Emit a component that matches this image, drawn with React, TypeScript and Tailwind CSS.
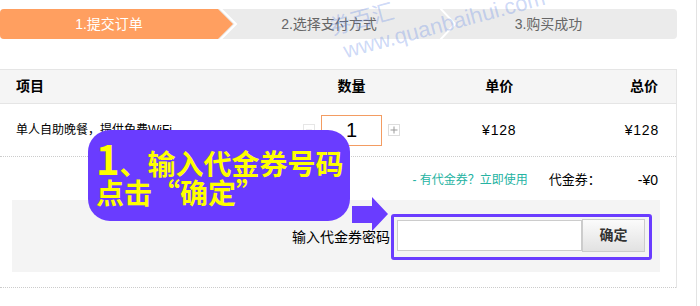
import React from "react";

const FONT = { fontFamily: '"Liberation Sans", "Noto Sans CJK SC", sans-serif' };

export default function App() {
  return (
    <div className="relative w-[700px] h-[306px] overflow-hidden bg-white text-black" style={FONT}>
      <div className="w-[697px] h-[306px] border-r border-[#e3e3e3]">
        {/* Steps bar */}
        <div className="pt-[9px]">
          <div className="relative w-[677px] h-[30px] rounded-[4px] overflow-hidden bg-[#ebebeb]">
            <svg className="absolute left-0 top-0" width="677" height="30" viewBox="0 0 677 30">
              <polygon points="0,0 218,0 233,15 218,30 0,30" fill="#ff9f60" />
              <polyline points="220,-1 236,15 220,31" fill="none" stroke="#ffffff" strokeWidth="2" />
              <polyline points="440,-1 455,15 440,31" fill="none" stroke="#ffffff" strokeWidth="2" />
            </svg>
            <div className="relative flex h-[30px] items-center text-[14px]">
              <div className="w-[218px] text-center text-white">1.提交订单</div>
              <div className="w-[222px] text-center text-[#666666]">2.选择支付方式</div>
              <div className="w-[237px] pr-[20px] text-center text-[#666666]">3.购买成功</div>
            </div>
          </div>
        </div>

        {/* Table */}
        <div className="mt-[30px] w-[677px] border-t border-r border-[#e5e5e5]">
          <div className="flex h-[34px] items-center bg-[#f5f5f5] border-b border-[#e5e5e5] text-[14px] font-bold">
            <div className="w-[290px] pl-[16px]">项目</div>
            <div className="w-[124px] text-center">数量</div>
            <div className="w-[172px] text-center">单价</div>
            <div className="w-[91px] pr-[18px] text-right">总价</div>
          </div>

          <div className="flex h-[53px] items-center border-b border-dotted border-[#cccccc]">
            <div className="w-[290px] pl-[16px] text-[12px]">单人自助晚餐，提供免费WiFi</div>
            <div className="w-[124px] flex items-center justify-center gap-[6px]">
              <div className="w-[12px] h-[12px] border border-[#e6e6e6] flex items-center justify-center">
                <svg width="8" height="8" viewBox="0 0 8 8">
                  <line x1="1" y1="4" x2="7" y2="4" stroke="#dddddd" strokeWidth="1" />
                </svg>
              </div>
              <div className="w-[61px] h-[31px] border border-[#f39c62] flex items-center justify-center text-[20px] leading-none">
                1
              </div>
              <div className="w-[12px] h-[12px] border border-[#dddddd] flex items-center justify-center">
                <svg width="8" height="8" viewBox="0 0 8 8">
                  <line x1="0.5" y1="4" x2="7.5" y2="4" stroke="#999999" strokeWidth="1" />
                  <line x1="4" y1="0.5" x2="4" y2="7.5" stroke="#999999" strokeWidth="1" />
                </svg>
              </div>
            </div>
            <div className="w-[172px] text-center text-[14px] tracking-[0.8px]">¥128</div>
            <div className="w-[91px] pr-[17px] text-right text-[14px] tracking-[0.8px]">¥128</div>
          </div>

          <div className="h-[131px] border-b border-dotted border-[#cccccc] pt-[14px]">
            <div className="flex h-[18px] items-center justify-end pr-[18px]">
              <span className="text-[12px] text-[#25b3a2]">- 有代金券？立即使用</span>
              <span className="ml-[21px] w-[89px] text-[13px]">代金券：</span>
              <span className="text-[14px]">-¥0</span>
            </div>
            <div className="mt-[11px] ml-[12px] w-[648px] h-[72px] bg-[#f4f4f4] flex items-start justify-end pr-[15px] pt-[20px]">
              <span className="mr-[7px] mt-[8px] text-[14px] leading-[18px]">输入代金券密码</span>
              <div className="w-[185px] h-[31px] bg-white border border-[#cccccc]" />
              <button className="w-[63px] h-[33px] -mt-[1px] border border-[#cccccc] bg-gradient-to-b from-[#fbfbfb] to-[#e2e2e2] text-[14px] font-bold text-[#333333]">
                确定
              </button>
            </div>
          </div>
        </div>
      </div>

      {/* Watermark */}
      <div className="absolute left-[333px] top-[16px] h-[24px] origin-bottom-left -rotate-[15deg] pointer-events-none text-[22px] leading-[24px] text-[rgba(90,130,230,0.3)] whitespace-nowrap">
        券百汇
      </div>
      <div className="absolute left-[347px] top-[39px] h-[24px] origin-bottom-left -rotate-[15deg] pointer-events-none text-[22px] leading-[24px] text-[rgba(90,130,230,0.3)] whitespace-nowrap">
        www.quanbaihui.com
      </div>

      {/* Callout */}
      <div
        className="absolute left-[88px] top-[130px] w-[262px] h-[91px] rounded-[22px] bg-[#6a3cff] pl-[8px] pt-[14px] text-[#ffff00] font-bold text-[28px] leading-[29px] whitespace-nowrap"
        style={{ fontFamily: '"Noto Sans CJK SC", sans-serif' }}
      >
        <div>
          <span className="text-[40px] leading-[29px]">1</span>、输入代金券号码
        </div>
        <div>点击“确定”</div>
      </div>

      {/* Arrow */}
      <svg className="absolute left-[350px] top-[195px]" width="42" height="38" viewBox="0 0 42 38">
        <polygon points="2,11 22,11 22,2 38,19 22,36 22,28 2,28" fill="#6a3cff" />
      </svg>

      {/* Highlight box */}
      <div className="absolute left-[391px] top-[214px] w-[261px] h-[46px] border-[3px] border-[#6a3cff] rounded-[3px]" />
    </div>
  );
}
